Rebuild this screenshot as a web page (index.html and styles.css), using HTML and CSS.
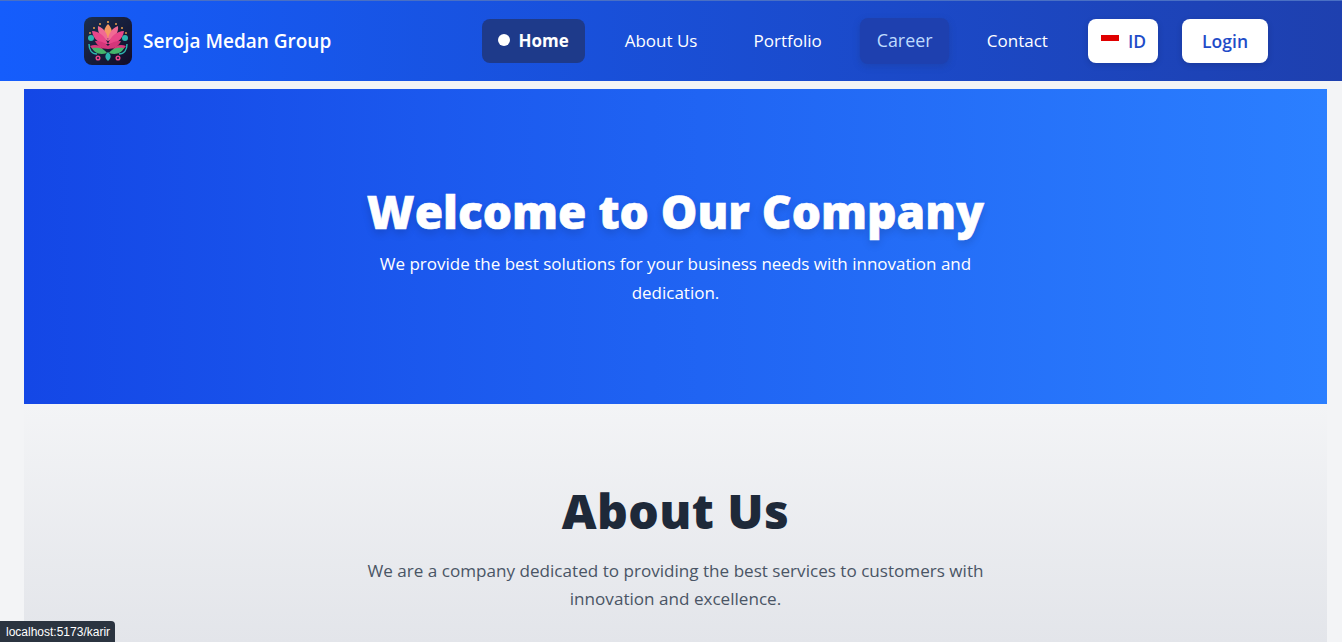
FILE: index.html
```html
<!DOCTYPE html>
<html lang="en">

<head>
  <meta charset="UTF-8">
  <meta name="viewport" content="width=device-width, initial-scale=1.0">
  <title>Seroja Medan Group</title>
  <link rel="stylesheet" href="styles.css">
</head>

<body>
  <header class="navbar">
    <a class="brand" href="#">
      <svg class="brand-logo" viewBox="0 0 48 48" aria-hidden="true">
        <defs>
          <linearGradient id="logoBg" x1="0" y1="0" x2="1" y2="1">
            <stop offset="0" stop-color="#1c2f4e"/>
            <stop offset="1" stop-color="#120c28"/>
          </linearGradient>
        </defs>
        <rect width="48" height="48" rx="8" fill="url(#logoBg)"/>
        <g fill="#e9a04c">
          <circle cx="24" cy="5" r="1.100"/>
          <circle cx="16" cy="7" r="1"/>
          <circle cx="32" cy="7" r="1"/>
          <circle cx="10" cy="11" r="1"/>
          <circle cx="38" cy="11" r="1"/>
          <circle cx="6" cy="16" r="0.900"/>
          <circle cx="42" cy="16" r="0.900"/>
        </g>
        <g fill="#2cb5b0">
          <circle cx="7" cy="21" r="3"/>
          <circle cx="41" cy="21" r="3"/>
        </g>
        <path d="M6 29c5-2 10-1 13 3-4 3-10 2-13-3zM42 29c-5-2-10-1-13 3 4 3 10 2 13-3z" fill="#d93a7d"/>
        <path d="M24 7c4 4 5 9 3 14h-6c-2-5-1-10 3-14z" fill="#f59a62"/>
        <path d="M14 9c6 2 10 8 10 15-6-2-11-8-10-15zM34 9c-6 2-10 8-10 15 6-2 11-8 10-15z" fill="#f06a94"/>
        <path d="M8 14c7 0 13 5 16 13-8 1-15-5-16-13zM40 14c-7 0-13 5-16 13 8 1 15-5 16-13z" fill="#e8478a"/>
        <path d="M11 24c5 0 10 1 13 5 3-4 8-5 13-5-2 5-7 8-13 8s-11-3-13-8z" fill="#d4367a"/>
        <path d="M8 31c6-1 12 0 15 5-6 2-12 1-15-5zM40 31c-6-1-12 0-15 5 6 2 12 1 15-5z" fill="#45b56c"/>
        <path d="M24 35c3 2.500 4 5.500 0 9-4-3.500-3-6.500 0-9z" fill="#2cb5b0"/>
        <g fill="none" stroke-width="1.500">
          <path d="M5 27c0 6 3 10 8 10" stroke="#2cb5b0"/>
          <path d="M43 27c0 6-3 10-8 10" stroke="#2cb5b0"/>
          <circle cx="14" cy="41" r="1.800" stroke="#e8478a"/>
          <circle cx="34" cy="41" r="1.800" stroke="#e8478a"/>
        </g>
      </svg>
      <span class="brand-name">Seroja Medan Group</span>
    </a>

    <nav class="nav-links">
      <a class="nav-link active" href="#"><span class="dot"></span>Home</a>
      <a class="nav-link" href="#">About Us</a>
      <a class="nav-link" href="#">Portfolio</a>
      <a class="nav-link hovered" href="#">Career</a>
      <a class="nav-link" href="#">Contact</a>
      <button class="nav-btn lang-btn" type="button">
        <svg class="flag" viewBox="0 0 18 14" aria-hidden="true">
          <rect width="18" height="6" y="1" fill="#e00000"/>
          <rect width="18" height="6" y="7" fill="#ffffff"/>
        </svg>
        ID
      </button>
      <button class="nav-btn" type="button">Login</button>
    </nav>
  </header>

  <main class="content">
    <section class="hero">
      <h1>Welcome to Our Company</h1>
      <p>We provide the best solutions for your business needs with innovation and dedication.</p>
    </section>

    <section class="about">
      <h2>About Us</h2>
      <p>We are a company dedicated to providing the best services to customers with innovation and excellence.</p>
    </section>
  </main>

  <div class="status-tip">localhost:5173/karir</div>
</body>

</html>
```

FILE: styles.css
```css
/* Base */

* {
  box-sizing: border-box;
}

html,
body {
  height: 100%;
}

body {
  margin: 0;
  background-color: #f3f4f6;
  font-family: "Open Sans", "Noto Sans", sans-serif;
  overflow: hidden;
}

a {
  color: inherit;
  text-decoration: none;
}

/* Navbar */

.navbar {
  height: 81px;
  padding: 0 74px 0 84px;
  display: flex;
  align-items: center;
  justify-content: space-between;
  background: linear-gradient(90deg, #155dfc 0%, #1e40af 100%);
  border-top: 1px solid #4a70c4;
  color: white;
}

.brand {
  display: flex;
  align-items: center;
  gap: 11px;
}

.brand-logo {
  width: 48px;
  height: 48px;
  display: block;
}

.brand-name {
  font-size: 19px;
  font-weight: 600;
}

.nav-links {
  display: flex;
  align-items: center;
  gap: 24px;
}

.nav-link {
  height: 44px;
  padding: 0 16px 2px;
  display: flex;
  align-items: center;
  border-radius: 8px;
  font-size: 17px;
}

.nav-link.active {
  background-color: #1e3a8a;
  font-weight: 700;
}

.nav-link.hovered {
  background-color: #1e40af;
  color: #bfdbfe;
  transform: scale(1.05);
  box-shadow: 0 2px 6px rgba(30, 58, 138, 0.3);
}

.dot {
  width: 12px;
  height: 12px;
  margin-right: 8px;
  border-radius: 50%;
  background-color: white;
}

.nav-btn {
  height: 44px;
  padding: 0 20px;
  display: flex;
  align-items: center;
  gap: 9px;
  border: none;
  border-radius: 8px;
  background-color: white;
  color: #1f4cc8;
  font-family: inherit;
  font-size: 17.5px;
  font-weight: 600;
  box-shadow: 0 2px 6px rgba(0, 0, 0, 0.15);
}

.lang-btn {
  padding: 0 12px 0 13px;
}

.flag {
  width: 18px;
  height: 14px;
}

/* Page sections */

.content {
  padding: 8px 15px 0 24px;
}

.hero {
  height: 315px;
  padding-top: 92px;
  background: linear-gradient(90deg, #1447e6 0%, #2b7fff 100%);
  color: white;
  text-align: center;
}

.hero h1 {
  margin: 0;
  font-size: 46px;
  line-height: 60px;
  font-weight: 800;
  -webkit-text-stroke: 0.6px white;
  text-shadow: 0 4px 8px rgba(0, 0, 0, 0.15);
}

.hero p {
  width: 640px;
  margin: 8px auto 0;
  font-size: 17px;
  line-height: 29px;
}

.about {
  height: 238px;
  padding-top: 77px;
  background: linear-gradient(180deg, #f3f4f6 0%, #e3e5ea 100%);
  text-align: center;
}

.about h2 {
  margin: 0;
  font-size: 48px;
  line-height: 60px;
  font-weight: 800;
  letter-spacing: 0.4px;
  color: #1e2939;
}

.about p {
  width: 672px;
  margin: 16px auto 0;
  font-size: 17.1px;
  line-height: 28px;
  color: #4a5565;
}

/* Link preview at the bottom left of the window */

.status-tip {
  position: fixed;
  left: 0;
  bottom: 0;
  height: 21px;
  padding: 0 5px 0 6px;
  display: flex;
  align-items: center;
  border-top-right-radius: 4px;
  background-color: #2b3440;
  color: white;
  font-family: "Liberation Sans", sans-serif;
  font-size: 12px;
}
```
